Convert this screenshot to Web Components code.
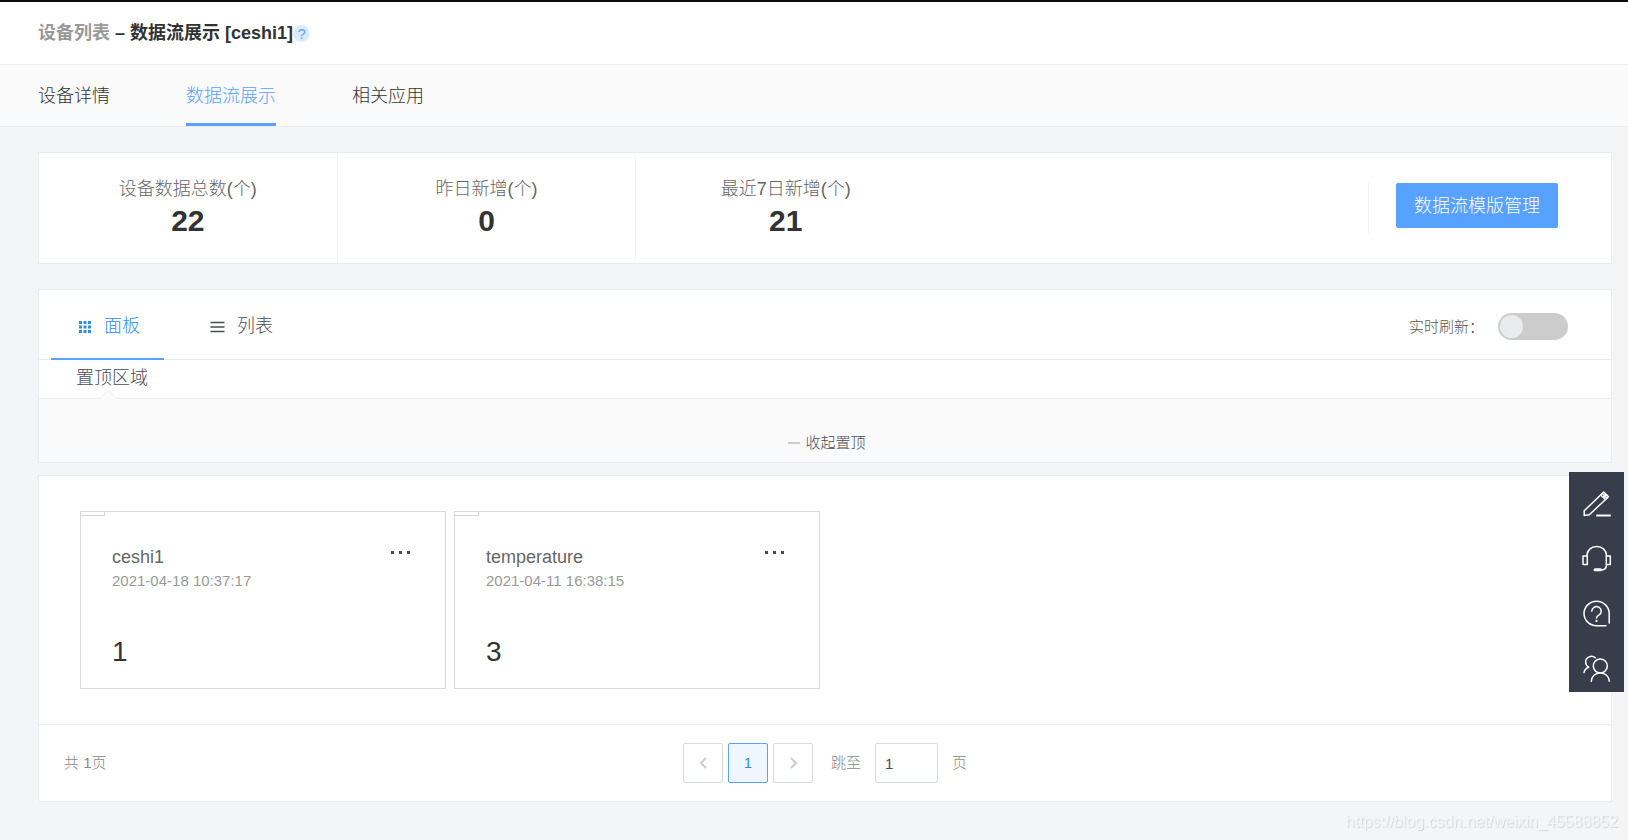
<!DOCTYPE html>
<html lang="zh-CN">
<head>
<meta charset="utf-8">
<meta name="viewport" content="width=device-width, initial-scale=1">
<title>数据流展示</title>
<style>
  html {
    --blue: #57a1ff;
    --line: #ebeced;
    --text: #333;
    --slate: #464c5b;
    --muted: #999;
    background: #f4f5f7;
  }
  body {
    margin: 0;
    font: 300 18px/24px "Liberation Sans", "Noto Sans CJK SC", sans-serif;
    color: var(--text);
  }
</style>
</head>
<body>

<c-app></c-app>

<script>

/*
 *  Base - clones a template string into an open shadow root
 */

class Component extends HTMLElement {

  constructor() {

    super()
    this.attachShadow({ mode: 'open' })

    const templateEl = document.createElement('template')
    templateEl.innerHTML = this.constructor.template

    this.shadowRoot.appendChild(
      templateEl.content.cloneNode(true)
    )

  }

}


/*
 *  Components - Page Header
 */

customElements.define(

  'c-page-header',

  class PageHeader extends Component {

    static template = `
      <style>
        :host {
          display: block;
          border-top: 2px solid #0c0c0c;
          border-bottom: 1px solid var(--line);
          background: #fff;
        }
        h1 {
          display: flex;
          align-items: center;
          height: 62px;
          margin: 0;
          padding: 0 38px;
          font-size: 18px;
          font-weight: 700;
          white-space: pre;
        }
        a {
          color: var(--muted);
          text-decoration: none;
        }
        button {
          width: 17px;
          height: 17px;
          padding: 0;
          border: 0;
          border-radius: 50%;
          background: #dcebff;
          color: var(--blue);
          font: 15px/17px "Liberation Sans", sans-serif;
        }
      </style>
      <h1><a href="#devices">设备列表</a> – <slot></slot><button type="button" title="帮助">?</button></h1>
    `

  }

)


/*
 *  Components - Nav Tabs
 */

customElements.define(

  'c-nav-tabs',

  class NavTabs extends Component {

    static template = `
      <style>
        :host {
          display: block;
          border-bottom: 1px solid var(--line);
          background: #fafafa;
        }
        nav {
          display: flex;
          gap: 76px;
          padding: 0 38px;
        }
        ::slotted(a) {
          box-sizing: border-box;
          height: 61px;
          padding-top: 4px;
          border-bottom: 3px solid transparent;
          color: var(--text);
          line-height: 55px;
          text-decoration: none;
        }
        ::slotted(a[aria-current]) {
          border-color: var(--blue);
          color: var(--blue);
        }
      </style>
      <nav><slot></slot></nav>
    `

  }

)


/*
 *  Components - Panel
 */

customElements.define(

  'c-panel',

  class Panel extends Component {

    static template = `
      <style>
        :host {
          display: block;
          border: 1px solid var(--line);
          background: #fff;
        }
      </style>
      <slot></slot>
    `

  }

)


/*
 *  Components - Stat
 */

customElements.define(

  'c-stat',

  class Stat extends Component {

    static template = `
      <style>
        :host {
          box-sizing: border-box;
          flex: 0 0 19%;
          padding: 24px 0 20px;
          text-align: center;
        }
        :host([divided]) {
          border-right: 1px solid #f3f4f5;
        }
        span {
          display: block;
          color: #666;
        }
        strong {
          display: block;
          font-size: 30px;
          font-weight: 700;
          line-height: 40px;
        }
      </style>
      <span></span>
      <strong><slot></slot></strong>
    `

    connectedCallback() {

      this.shadowRoot.querySelector('span').textContent = this.getAttribute('label')

    }

  }

)


/*
 *  Components - Stats Bar
 */

customElements.define(

  'c-stats-bar',

  class StatsBar extends Component {

    static template = `
      <style>
        :host {
          display: flex;
          min-height: 110px;
        }
        .action {
          display: flex;
          align-items: flex-start;
          margin-left: auto;
          padding: 30px 53px 0 0;
        }
        .action::before {
          content: "";
          width: 1px;
          height: 50px;
          margin-right: 27px;
          background: #f0f1f2;
        }
        button {
          height: 45px;
          padding: 0 18px;
          border: 0;
          border-radius: 2px;
          background: var(--blue);
          color: #fff;
          font: inherit;
        }
      </style>
      <slot></slot>
      <div class="action">
        <button type="button">数据流模版管理</button>
      </div>
    `

  }

)


/*
 *  Components - View Bar
 */

customElements.define(

  'c-view-bar',

  class ViewBar extends Component {

    static template = `
      <style>
        :host {
          display: flex;
          justify-content: space-between;
          height: 69px;
          padding: 0 43px 0 12px;
          border-bottom: 1px solid var(--line);
        }
        .views {
          display: flex;
          gap: 20px;
        }
        .views button {
          box-sizing: border-box;
          display: flex;
          align-items: center;
          gap: 12px;
          height: 70px;
          padding: 4px 24px 0 26px;
          border: 0;
          border-bottom: 2px solid transparent;
          background: none;
          color: var(--slate);
          font: inherit;
        }
        .views button[aria-pressed="true"] {
          border-color: var(--blue);
          color: #2d8cf0;
        }
        svg {
          width: 15px;
          height: 15px;
        }
        label {
          display: flex;
          align-items: center;
          gap: 14px;
          padding-top: 4px;
          color: #555;
          font-size: 15px;
        }
        input {
          appearance: none;
          width: 70px;
          height: 27px;
          margin: 0;
          padding: 2px;
          border-radius: 14px;
          background: #ccc;
        }
        input::before {
          content: "";
          display: block;
          width: 23px;
          height: 23px;
          border-radius: 50%;
          background: #e9eced;
        }
        input:checked {
          background: var(--blue);
        }
        input:checked::before {
          margin-left: auto;
        }
      </style>
      <div class="views">
        <button type="button" aria-pressed="true">
          <svg viewBox="0 0 15 15" fill="currentColor" aria-hidden="true">
            <path d="M2 2h3v3H2zM6.500 2h3v3h-3zM11 2h3v3h-3zM2 6.500h3v3H2zM6.500 6.500h3v3h-3zM11 6.500h3v3h-3zM2 11h3v3H2zM6.500 11h3v3h-3zM11 11h3v3h-3z"/>
          </svg>
          面板
        </button>
        <button type="button" aria-pressed="false">
          <svg viewBox="0 0 15 15" fill="none" stroke="currentColor" stroke-width="1.3" aria-hidden="true">
            <path d="M.5 3.500h14M.5 8h14M.5 12.500h14"/>
          </svg>
          列表
        </button>
      </div>
      <label>实时刷新：<input type="checkbox" role="switch"></label>
    `

  }

)


/*
 *  Components - Pinned Area
 */

customElements.define(

  'c-pinned-area',

  class PinnedArea extends Component {

    static template = `
      <style>
        :host {
          display: block;
          color: var(--slate);
        }
        h2 {
          position: relative;
          height: 38px;
          margin: 0;
          padding: 0 37px;
          border-bottom: 1px solid var(--line);
          font-size: 18px;
          font-weight: inherit;
          line-height: 37px;
        }
        /* notch pointing at the heading */
        svg {
          position: absolute;
          left: 61px;
          bottom: -1px;
          width: 17px;
          height: 9px;
        }
        .body {
          display: flex;
          justify-content: center;
          align-items: flex-end;
          height: 63px;
          background: #fafafa;
        }
        button {
          display: flex;
          align-items: center;
          gap: 5px;
          padding: 0 0 7px 4px;
          border: 0;
          background: none;
          color: inherit;
          font: inherit;
          font-size: 15px;
        }
        button::before {
          content: "";
          width: 12px;
          height: 2px;
          background: #ccc;
        }
      </style>
      <h2>
        置顶区域
        <svg viewBox="0 0 17 9" aria-hidden="true">
          <path d="M0 9 8.500 1 17 9z" fill="#fafafa"/>
          <path d="M0 8.500 8 .8h1l8 7.700" fill="none" stroke="#ebeced"/>
        </svg>
      </h2>
      <div class="body">
        <button type="button">收起置顶</button>
      </div>
    `

  }

)


/*
 *  Components - Stream Card
 */

customElements.define(

  'c-stream-card',

  class StreamCard extends Component {

    static template = `
      <style>
        :host {
          position: relative;
          box-sizing: border-box;
          width: 366px;
          padding: 33px 31px 18px;
          border: 1px solid #d7d8da;
        }
        /* small tag hanging from the top left corner */
        .tag {
          position: absolute;
          top: 0;
          left: 0;
          width: 23px;
          height: 3px;
          border: solid #d7d8da;
          border-width: 0 1px 1px 0;
        }
        header {
          display: flex;
          justify-content: space-between;
        }
        h3 {
          margin: 0;
          color: #666;
          font-size: 18px;
          font-weight: inherit;
        }
        button {
          height: 15px;
          padding: 0 3px;
          border: 0;
          background: none;
          color: var(--slate);
        }
        button svg {
          display: block;
          width: 20px;
          height: 3px;
        }
        time {
          display: block;
          color: var(--muted);
          font-size: 15px;
        }
        output {
          display: block;
          margin-top: 41px;
          font-size: 28px;
          line-height: 36px;
        }
      </style>
      <span class="tag"></span>
      <header>
        <h3></h3>
        <button type="button" aria-label="更多">
          <svg viewBox="0 0 20 3" fill="currentColor" aria-hidden="true">
            <path d="M0 0h3v3H0zM8 0h3v3H8zM16 0h3v3h-3z"/>
          </svg>
        </button>
      </header>
      <time></time>
      <output><slot></slot></output>
    `

    connectedCallback() {

      this.shadowRoot.querySelector('h3').textContent = this.getAttribute('name')
      this.shadowRoot.querySelector('time').textContent = this.getAttribute('time')

    }

  }

)


/*
 *  Components - Card List
 */

customElements.define(

  'c-card-list',

  class CardList extends Component {

    static template = `
      <style>
        :host {
          display: flex;
          flex-wrap: wrap;
          gap: 8px;
          padding: 35px 41px;
        }
      </style>
      <slot></slot>
    `

  }

)


/*
 *  Components - Pagination
 */

customElements.define(

  'c-pagination',

  class Pagination extends Component {

    static template = `
      <style>
        :host {
          display: grid;
          grid-template-columns: 1fr auto 1fr;
          align-items: center;
          padding: 18px 25px;
          border-top: 1px solid var(--line);
          color: #888;
          font-size: 15px;
        }
        nav {
          display: flex;
          align-items: center;
          gap: 14px;
        }
        .pages {
          display: flex;
          gap: 5px;
          margin-right: 4px;
        }
        button, input {
          box-sizing: border-box;
          height: 40px;
          border: 1px solid #d7dae0;
          border-radius: 2px;
          background: #fff;
          font: inherit;
        }
        button {
          display: grid;
          place-items: center;
          width: 40px;
          padding: 0;
          color: #ccc;
        }
        button[aria-current] {
          border-color: var(--blue);
          background: #eff6ff;
          color: #2d8cf0;
        }
        svg {
          width: 12px;
          height: 12px;
          fill: none;
          stroke: currentColor;
          stroke-width: 2;
        }
        input {
          width: 63px;
          padding: 0 9px;
          color: var(--slate);
        }
      </style>
      <span>共 1页</span>
      <nav>
        <div class="pages">
          <button type="button" aria-label="上一页" disabled>
            <svg viewBox="0 0 12 12"><path d="M9 1 4 6l5 5"/></svg>
          </button>
          <button type="button" aria-current="page">1</button>
          <button type="button" aria-label="下一页" disabled>
            <svg viewBox="0 0 12 12"><path d="m4 1 5 5-5 5"/></svg>
          </button>
        </div>
        <label for="page">跳至</label>
        <input id="page" type="text" inputmode="numeric" value="1">
        <span>页</span>
      </nav>
    `

  }

)


/*
 *  Components - Side Tools, floating over the right edge
 */

customElements.define(

  'c-side-tools',

  class SideTools extends Component {

    static template = `
      <style>
        :host {
          position: fixed;
          right: 4px;
          bottom: 148px;
          width: 55px;
          background: #373d4b;
        }
        button {
          display: block;
          padding: 0;
          border: 0;
          background: none;
          color: #fff;
        }
        svg {
          display: block;
          width: 55px;
          height: 55px;
          fill: none;
          stroke: currentColor;
          stroke-width: 1.5;
          stroke-linecap: round;
          stroke-linejoin: round;
        }
      </style>
      <button type="button" aria-label="反馈">
        <svg viewBox="0 0 55 55">
          <path d="M15.200 43.500v-4.700L34.800 20l4.700 4.700-19.200 18.100-5.100.7z"/>
          <path d="m31.800 23 4.500 4.500M33.300 21.500l4.600 4.600M36.500 21.700l-1.600 4.300M38 23.200l-4.200 1.500"/>
          <path d="M28 43.500h13" stroke-width="2"/>
        </svg>
      </button>
      <button type="button" aria-label="客服">
        <svg viewBox="0 0 55 55">
          <path d="M18 28.500c0-5 4-9 9.700-9s9.800 4 9.800 9"/>
          <path d="M14 29h4.300v8.600H14zM37.300 29h4v8.600h-4z"/>
          <path d="M37.500 38c0 3.300-2.500 5-6 5"/>
          <path d="M26 42.800h5.500" stroke-width="3"/>
        </svg>
      </button>
      <button type="button" aria-label="帮助">
        <svg viewBox="0 0 55 55">
          <path d="M40.200 41v-9.500a12.600 12.200 0 1 0-12.600 12.200H37"/>
          <path d="M22.800 29.200a4.700 4.500 0 1 1 7.300 3.700c-1.800 1.100-2.600 1.600-2.600 3.100"/>
          <path d="M27.500 38.900v.2" stroke-width="2.200"/>
        </svg>
      </button>
      <button type="button" aria-label="社区">
        <svg viewBox="0 0 55 55">
          <circle cx="31.300" cy="29" r="7"/>
          <path d="M22.300 44.200c.5-5 4-8.200 9-8.200s8.500 3.200 9 8.200"/>
          <path d="M26.300 20.800c-3.600-3-9.700-1-9.700 4.200 0 2.400 1.100 4 3.200 5.200-2.700 1-4.400 2.800-4.800 5.400"/>
        </svg>
      </button>
    `

  }

)


/*
 *  Components - Watermark
 */

customElements.define(

  'c-watermark',

  class Watermark extends Component {

    static template = `
      <style>
        :host {
          position: fixed;
          right: 10px;
          bottom: 6px;
          color: #f4f4f5;
          font-size: 16px;
          text-shadow: 1px 1px 1px #d4d4d4;
          pointer-events: none;
        }
      </style>
      <slot></slot>
    `

  }

)


/*
 *  App
 */

customElements.define(

  'c-app',

  class App extends Component {

    static template = `
      <style>
        :host {
          display: block;
        }
        main {
          padding: 25px 16px 38px 38px;
        }
        .views {
          margin-top: 25px;
        }
        .streams {
          margin-top: 12px;
        }
      </style>
      <c-page-header>数据流展示 [ceshi1]</c-page-header>
      <c-nav-tabs>
        <a href="#detail">设备详情</a>
        <a href="#stream" aria-current="page">数据流展示</a>
        <a href="#apps">相关应用</a>
      </c-nav-tabs>
      <main>
        <c-panel>
          <c-stats-bar>
            <c-stat label="设备数据总数(个)" divided>22</c-stat>
            <c-stat label="昨日新增(个)" divided>0</c-stat>
            <c-stat label="最近7日新增(个)">21</c-stat>
          </c-stats-bar>
        </c-panel>
        <c-panel class="views">
          <c-view-bar></c-view-bar>
          <c-pinned-area></c-pinned-area>
        </c-panel>
        <c-panel class="streams">
          <c-card-list>
            <c-stream-card name="ceshi1" time="2021-04-18 10:37:17">1</c-stream-card>
            <c-stream-card name="temperature" time="2021-04-11 16:38:15">3</c-stream-card>
          </c-card-list>
          <c-pagination></c-pagination>
        </c-panel>
      </main>
      <c-side-tools></c-side-tools>
      <c-watermark>https://blog.csdn.net/weixin_45588852</c-watermark>
    `

  }

)

</script>
</body>
</html>
